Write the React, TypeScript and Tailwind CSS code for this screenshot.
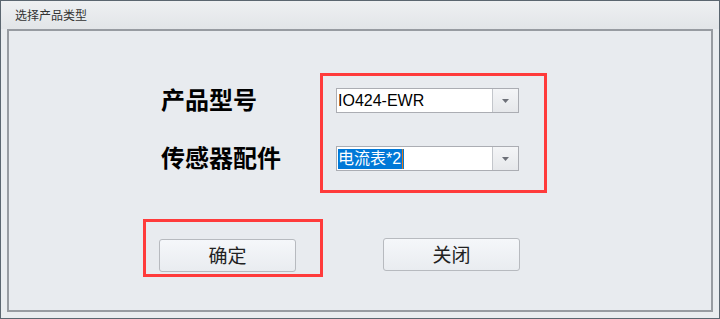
const cjk = { fontFamily: '"Noto Sans CJK SC", sans-serif' };
const latin = { fontFamily: '"Liberation Sans", "Noto Sans CJK SC", sans-serif' };

function Combo({ value, selected }: { value: string; selected?: boolean }) {
  return (
    <div className="flex h-[25px] w-[183px] border border-[#abadb3] bg-white">
      <div className="flex flex-1 items-center pl-[1px] text-[16px] leading-none text-black" style={latin}>
        {selected ? (
          <span className="flex h-[20px] items-center bg-[#0078d7] pr-[1px] text-white">
            {value}
            <span className="ml-[1px] h-[20px] w-[1px] bg-[#e07a1f]" />
          </span>
        ) : (
          value
        )}
      </div>
      <div className="flex w-[26px] items-center justify-center border-l border-[#c3c6cb] bg-gradient-to-b from-[#f4f5f7] to-[#e6e8eb]">
        <svg width="8" height="4" viewBox="0 0 8 4">
          <path d="M0 0h7L3.5 4z" fill="#6d7078" />
        </svg>
      </div>
    </div>
  );
}

function Btn({ label }: { label: string }) {
  return (
    <button
      className="flex h-[33px] w-[137px] items-center justify-center rounded-[3px] border border-[#b7babf] bg-gradient-to-b from-[#f5f7fa] to-[#e9ecf0] text-[19px] text-[#222]"
      style={cjk}
    >
      {label}
    </button>
  );
}

export default function App() {
  return (
    <div className="flex h-[319px] w-[720px] flex-col border border-[#5b6670] bg-[#e9ecef]">
      <div className="flex h-[28px] items-center bg-gradient-to-b from-[#eef0f2] to-[#e2e5e8] pl-[14px] text-[12px] text-[#333]" style={cjk}>
        选择产品类型
      </div>
      <div className="mx-[6px] flex h-[283px] flex-col border-2 border-[#979ba1] bg-[#e8ebef] pt-[42px]">
        <div className="flex">
          <div className="ml-[152px] flex w-[159px] flex-col gap-[33px] pt-[13px] font-bold text-[24px] text-black" style={cjk}>
            <div className="flex h-[25px] items-center">产品型号</div>
            <div className="flex h-[25px] items-center">传感器配件</div>
          </div>
          <div className="flex h-[120px] w-[227px] flex-col gap-[33px] border-[3px] border-[#ff3b3b] pl-[13px] pt-[12px]">
            <Combo value="IO424-EWR" />
            <Combo value="电流表*2" selected />
          </div>
        </div>
        <div className="mt-[26px] flex items-start">
          <div className="ml-[134px] h-[58px] w-[180px] border-[3px] border-[#ff3b3b] pl-[13px] pt-[17px]">
            <Btn label="确定" />
          </div>
          <div className="ml-[60px] mt-[19px]">
            <Btn label="关闭" />
          </div>
        </div>
      </div>
    </div>
  );
}
